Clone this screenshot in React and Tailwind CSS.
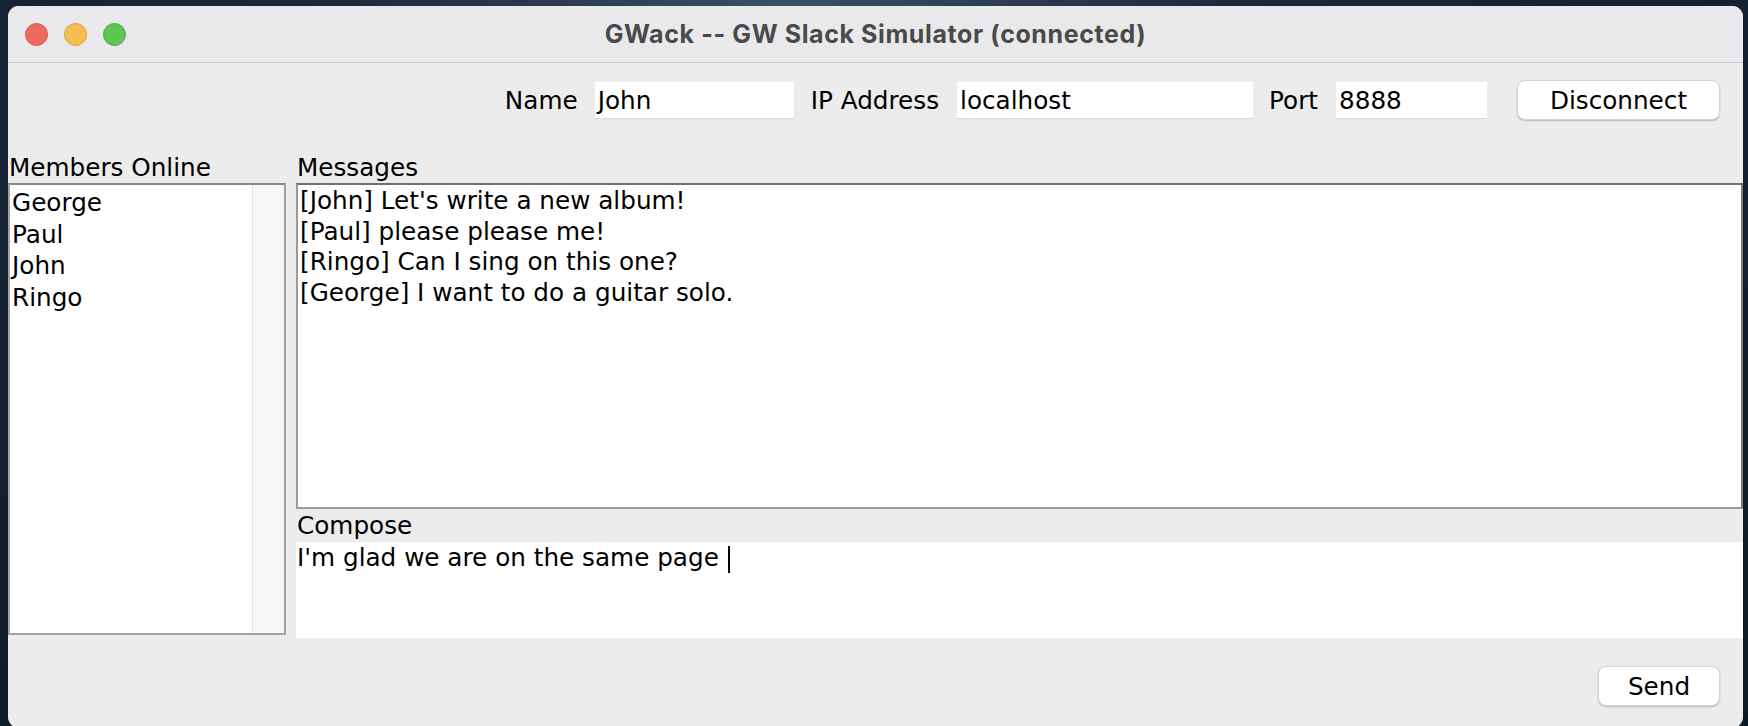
export default function App() {
  const members = ["George", "Paul", "John", "Ringo"];
  const messages = [
    "[John] Let's write a new album!",
    "[Paul] please please me!",
    "[Ringo] Can I sing on this one?",
    "[George] I want to do a guitar solo.",
  ];
  return (
    <div className="w-[1748px] h-[726px] overflow-hidden bg-[radial-gradient(ellipse_at_45%_0%,#3b4f66_0%,#1a2839_35%,#0f1a27_100%)] pt-[6px] pl-[8px]">
      <div className="w-[1735px] h-[722px] rounded-[11px] overflow-hidden bg-[#ececec] flex flex-col font-['DejaVu_Sans',sans-serif] text-[24.7px] leading-[31px] text-black">
        {/* Title bar */}
        <div className="h-[57px] shrink-0 bg-[#e9e9eb] border-b border-[#cdcdcd] grid grid-cols-[1fr_auto_1fr] items-center">
          <div className="flex items-center gap-[16px] pl-[17px]">
            <span className="w-[23px] h-[23px] rounded-full bg-[#ee6a5e] border border-[#d8584c]" />
            <span className="w-[23px] h-[23px] rounded-full bg-[#f5bf4f] border border-[#d9a43f]" />
            <span className="w-[23px] h-[23px] rounded-full bg-[#61c554] border border-[#4fa944]" />
          </div>
          <div className="font-['Inter',sans-serif] font-bold text-[25px] text-[#4a4a4a] tracking-[0.6px]">
            GWack -- GW Slack Simulator (connected)
          </div>
          <div />
        </div>

        {/* Connection row */}
        <div className="mt-[17px] h-[40px] shrink-0 flex items-center justify-end pr-[23px]">
          <span>Name</span>
          <div className="ml-[17px] w-[199px] h-[36px] bg-white shadow-[0_1px_0_#d6d6d6] pl-[3px] flex items-center">John</div>
          <span className="ml-[17px]">IP Address</span>
          <div className="ml-[18px] w-[296px] h-[36px] bg-white shadow-[0_1px_0_#d6d6d6] pl-[3px] flex items-center">localhost</div>
          <span className="ml-[16px]">Port</span>
          <div className="ml-[18px] w-[151px] h-[36px] bg-white shadow-[0_1px_0_#d6d6d6] pl-[3px] flex items-center">8888</div>
          <button className="ml-[30px] w-[203px] h-[40px] bg-white rounded-[8px] border border-[#d4d4d4] shadow-[0_1px_1.5px_rgba(0,0,0,0.22)] flex items-center justify-center">
            Disconnect
          </button>
        </div>

        {/* Main area */}
        <div className="mt-[32px] grid grid-cols-[278px_1fr] gap-x-[10px]">
          <div className="flex flex-col">
            <div className="h-[31px] pl-[1px]">Members Online</div>
            <div className="h-[452px] border-2 border-[#a2a2a2] border-t-[#8a8a8a] bg-white flex">
              <div className="flex-1 pl-[2px] pt-[2px] leading-[31.5px]">
                {members.map((m) => (
                  <div key={m}>{m}</div>
                ))}
              </div>
              <div className="w-[32px] bg-[#f7f7f7] border-l border-[#e4e4e4]" />
            </div>
          </div>
          <div className="flex flex-col">
            <div className="h-[31px] pl-[1px]">Messages</div>
            <div className="h-[326px] border-2 border-[#9a9a9a] border-t-[#707070] border-r-[#7a7a7a] bg-white pl-[2px] pt-[1px] leading-[30.7px]">
              {messages.map((m) => (
                <div key={m}>{m}</div>
              ))}
            </div>
            <div className="h-[33px] pl-[1px] flex items-center">Compose</div>
            <div className="h-[96px] bg-white pl-[1px] flex items-start">
              <span className="whitespace-pre">I'm glad we are on the same page </span>
              <span className="inline-block w-[2px] h-[27px] bg-black mt-[4px] ml-[1px]" />
            </div>
          </div>
        </div>

        {/* Bottom row */}
        <div className="mt-[28px] flex justify-end pr-[23px]">
          <button className="w-[122px] h-[40px] bg-white rounded-[8px] border border-[#d4d4d4] shadow-[0_1px_1.5px_rgba(0,0,0,0.22)] flex items-center justify-center">
            Send
          </button>
        </div>
      </div>
    </div>
  );
}
